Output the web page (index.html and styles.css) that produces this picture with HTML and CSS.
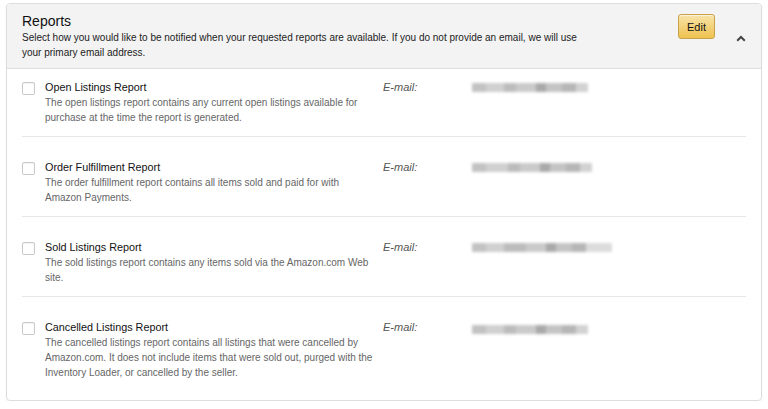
FILE: index.html
```html
<!DOCTYPE html>
<html>
<head>
<meta charset="utf-8">
<link rel="stylesheet" href="styles.css">
</head>
<body>
<section class="card">
  <header class="card-head">
    <div class="head-text">
      <h2 class="title">Reports</h2>
      <p class="intro">Select how you would like to be notified when your requested reports are available. If you do not provide an email, we will use your primary email address.</p>
    </div>
    <div class="head-actions">
      <button class="btn-edit">Edit</button>
      <svg class="chevron" width="10" height="7" viewBox="0 0 10 7"><path d="M1.2 5.8 L5 2 L8.8 5.8" fill="none" stroke="#444" stroke-width="2"/></svg>
    </div>
  </header>
  <div class="rows">
    <div class="row">
      <span class="check"></span>
      <div class="info">
        <div class="name">Open Listings Report</div>
        <div class="desc">The open listings report contains any current open listings available for purchase at the time the report is generated.</div>
      </div>
      <div class="label">E-mail:</div>
      <div class="blur b1"><i></i><i></i><i></i><i></i><i></i><i></i><i></i><i></i></div>
    </div>
    <div class="row">
      <span class="check"></span>
      <div class="info">
        <div class="name">Order Fulfillment Report</div>
        <div class="desc">The order fulfillment report contains all items sold and paid for with Amazon Payments.</div>
      </div>
      <div class="label">E-mail:</div>
      <div class="blur b2"><i></i><i></i><i></i><i></i><i></i><i></i><i></i><i></i></div>
    </div>
    <div class="row">
      <span class="check"></span>
      <div class="info">
        <div class="name">Sold Listings Report</div>
        <div class="desc">The sold listings report contains any items sold via the Amazon.com Web site.</div>
      </div>
      <div class="label">E-mail:</div>
      <div class="blur b3"><i></i><i></i><i></i><i></i><i></i><i></i><i></i><i></i></div>
    </div>
    <div class="row">
      <span class="check"></span>
      <div class="info">
        <div class="name">Cancelled Listings Report</div>
        <div class="desc">The cancelled listings report contains all listings that were cancelled by Amazon.com. It does not include items that were sold out, purged with the Inventory Loader, or cancelled by the seller.</div>
      </div>
      <div class="label">E-mail:</div>
      <div class="blur b4"><i></i><i></i><i></i><i></i><i></i><i></i><i></i><i></i></div>
    </div>
  </div>
</section>
</body>
</html>
```

FILE: styles.css
```css
* { box-sizing: border-box; }
html, body { margin: 0; padding: 0; background: #fff; }
body {
  font-family: "Liberation Sans", Arial, Helvetica, sans-serif;
  color: #111;
  padding: 3px 6px 0 6px;
}
.card {
  width: 756px;
  height: 398px;
  border: 1px solid #dddddd;
  border-radius: 4px;
  box-shadow: 0 1px 2px rgba(0,0,0,0.06);
  overflow: hidden;
}
.card-head {
  background: #f3f3f3;
  border-bottom: 1px solid #dddddd;
  height: 65px;
  padding: 9px 15px 0 15px;
  display: flex;
  justify-content: space-between;
}
.title {
  margin: 0;
  font-size: 14px;
  font-weight: normal;
  line-height: 17px;
  color: #111;
}
.intro {
  margin: 0;
  font-size: 10px;
  line-height: 15px;
  color: #222;
  width: 575px;
}
.head-actions {
  display: flex;
  align-items: flex-start;
  padding-top: 1px;
}
.btn-edit {
  width: 37px;
  height: 25px;
  padding: 0;
  margin: 0;
  font-family: inherit;
  font-size: 11px;
  color: #111;
  border: 1px solid #c7a24a;
  border-radius: 3px;
  background: linear-gradient(#f8e3a9, #f0c24f);
  box-shadow: 0 1px 0 rgba(255,255,255,0.6) inset;
}
.chevron {
  margin: 21px 0 0 21px;
}
.rows {
  padding: 0 15px;
}
.row {
  display: flex;
  align-items: flex-start;
  padding: 11px 0 11px 0;
}
.row + .row {
  border-top: 1px solid #e7e7e7;
  padding-top: 23px;
}
.check {
  flex: none;
  width: 13px;
  height: 13px;
  margin-top: 2px;
  margin-right: 10px;
  border: 1px solid #c8c8c8;
  border-radius: 2px;
  background: #fff;
  box-shadow: 0 1px 1px rgba(0,0,0,0.05) inset;
}
.info {
  flex: none;
  width: 328px;
  line-height: 15px;
}
.name {
  font-size: 10.8px;
  color: #111;
}
.desc {
  font-size: 10px;
  color: #666;
}
.label {
  flex: none;
  margin-left: 10px;
  width: 89px;
  font-size: 11px;
  line-height: 15px;
  font-style: italic;
  color: #555;
}
.blur {
  flex: none;
  display: flex;
  margin-top: 3px;
  height: 9px;
  filter: blur(1.4px);
}
.blur i {
  display: block;
  height: 9px;
  background: #bdbdbd;
}
.blur i:nth-child(1) { width: 14px; background: #c2c2c2; }
.blur i:nth-child(2) { width: 18px; background: #d0d0d0; }
.blur i:nth-child(3) { width: 12px; background: #bcbcbc; }
.blur i:nth-child(4) { width: 20px; background: #cacaca; }
.blur i:nth-child(5) { width: 10px; background: #a9a9a9; }
.blur i:nth-child(6) { width: 16px; background: #c4c4c4; }
.blur i:nth-child(7) { width: 14px; background: #b6b6b6; }
.blur i:nth-child(8) { width: 12px; background: #d2d2d2; }
.b2 i:nth-child(2), .b3 i:nth-child(3) { width: 22px; }
.b3 i:nth-child(8) { width: 26px; background: #dcdcdc; }
.b4 { margin-top: 5px; }
```
